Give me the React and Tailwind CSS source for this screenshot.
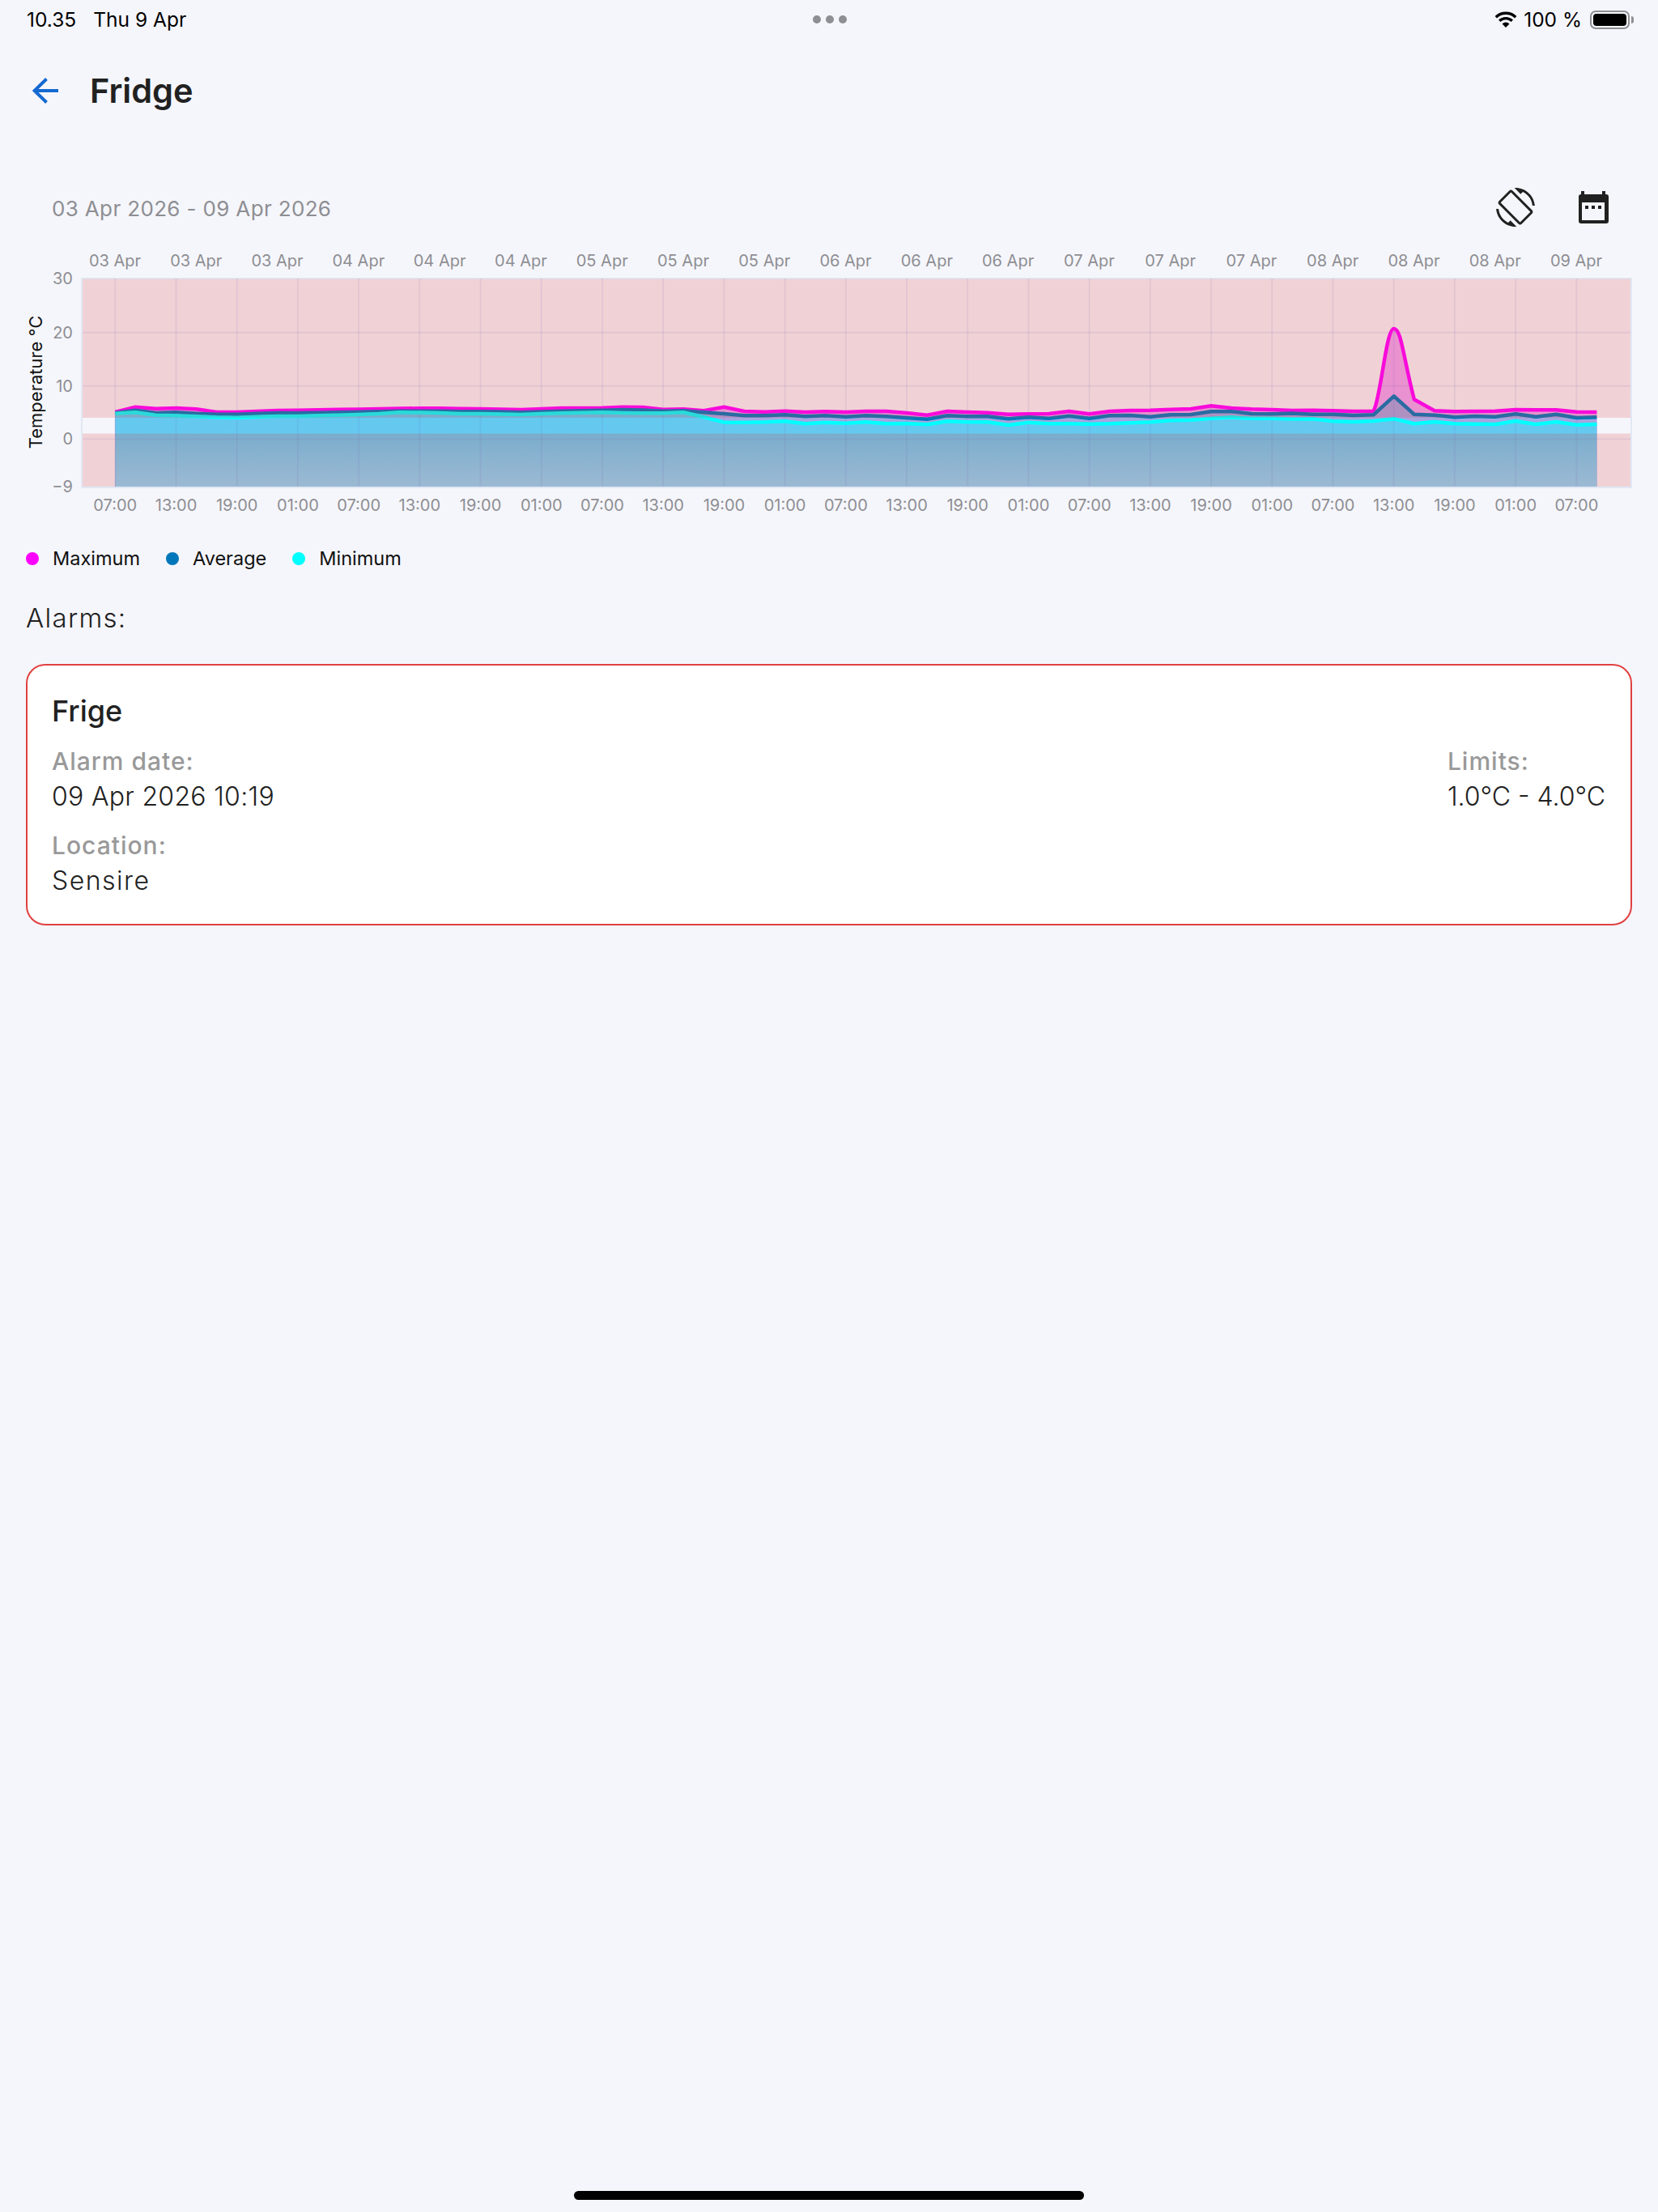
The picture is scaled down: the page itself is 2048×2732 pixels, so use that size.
import React from "react";

const maxT = [509,502.7,504.7,504,505.3,509,509,508,507,506.7,506.3,505.7,505.5,505,504.5,504.3,504.3,504.8,505,505.5,506,505,504,504,503.7,502.7,503,505.7,505.3,507.3,502.7,508,508.7,507.7,509,508.3,509,508,508,510,512.7,508,509,509.7,511.7,511.3,511,508,511.3,508,507,506.7,505.7,505,501.3,504,505.3,506,507,506.7,507.3,508,507.7,406,493.3,507.3,508.3,508,507.7,506,506.3,506.3,508.7,509];
const avgT = [510,506.7,510,509.3,510.7,511.7,511.7,510.7,510,510,509.7,509.3,508.7,508.3,507.7,507.7,507.7,508.3,508.3,508.5,509.3,508.5,507.7,507.2,506.7,506,506.5,507.7,507.3,509.3,511,513.3,513.3,512.3,514.3,513.3,514.7,513.3,514.3,516,517.7,513.3,514.3,514.3,517.3,515.3,516.7,513.7,516.7,513.3,513,514.7,512.3,512,508.3,508.3,511,511.3,510.5,511.7,511.7,513,512.3,489.3,511.7,512.7,515.3,514,514.7,511.3,514.7,511.7,516,515.3];
const minT = [510.7,509.3,512.7,513.3,514.3,515.3,515.7,514.7,514,514,513.3,512.7,512,511,509.3,509.6,510,511,511,511.5,512,511,510.3,509.8,509.3,510,510.3,510.3,509.3,515,521.7,521.7,521.3,520.3,523.3,521.7,522.7,521.3,523.3,523,524.3,520.3,521.3,521.3,525,521.7,523.3,523.3,523.7,523.3,522.3,521.3,519.3,518.7,516.7,515.3,516.7,516.7,517.5,517.3,520.3,521,520,517.3,523.3,521,523.3,523.7,524,520,524,521,524.7,524];

const startX = 142.3;
const stepX = 25.07;
const bottomY = 601;

// the spike on the max line is the only rounded part, the rest is straight segments
const spikeCurves = {
  62: "C1706 490 1712 406 1721.7 406",
  63: "C1731 406 1733 440 1746.8 493.3",
};

const linePath = (ys, curves = {}) => {
  let d = `M${startX} ${ys[0]}`;
  for (let i = 1; i < ys.length; i++) {
    d += curves[i - 1] ? ` ${curves[i - 1]}` : ` L${startX + i * stepX} ${ys[i]}`;
  }
  return d;
};

const areaPath = (ys, curves) => {
  const lastX = startX + (ys.length - 1) * stepX;
  return `${linePath(ys, curves)} L${lastX} ${bottomY} L${startX} ${bottomY} Z`;
};

const dayLabels = ["03 Apr","03 Apr","03 Apr","04 Apr","04 Apr","04 Apr","05 Apr","05 Apr","05 Apr","06 Apr","06 Apr","06 Apr","07 Apr","07 Apr","07 Apr","08 Apr","08 Apr","08 Apr","09 Apr"];
const hours = ["07:00", "13:00", "19:00", "01:00"];
const hourLabels = Array.from({ length: 25 }, (_, i) => hours[i % 4]);
const yLabels = [
  { text: "30", y: 344 },
  { text: "20", y: 411 },
  { text: "10", y: 477 },
  { text: "0", y: 542 },
  { text: "\u22129", y: 601 },
];

const Chart = () => (
  <svg className="block w-[2048px] h-[340px]" viewBox="0 300 2048 340">
    <defs>
      <linearGradient id="minFill" gradientUnits="userSpaceOnUse" x1="0" y1="510" x2="0" y2="601">
        <stop offset="0" stopColor="#63c8ef" />
        <stop offset="0.3" stopColor="#66c9ef" />
        <stop offset="1" stopColor="#8ed7f7" />
      </linearGradient>
    </defs>

    <rect x="101" y="344" width="1914" height="258" fill="#f5f6fb" stroke="#e0e8f5" strokeWidth="2" />

    <path d={areaPath(maxT, spikeCurves)} fill="#eda7f2" />
    <path d={areaPath(avgT)} fill="#a5a5e1" />
    <path d={areaPath(minT)} fill="url(#minFill)" />

    {hourLabels.map((_, i) => (
      <line key={i} x1={startX + i * 75.21} x2={startX + i * 75.21} y1="344" y2="601" stroke="#6464c8" strokeOpacity="0.11" strokeWidth="2" />
    ))}
    {[410.7, 476.7, 542.3].map((y) => (
      <line key={y} x1="102" x2="2014" y1={y} y2={y} stroke="#6464c8" strokeOpacity="0.11" strokeWidth="2" />
    ))}

    <path d={linePath(maxT, spikeCurves)} fill="none" stroke="#ff00ff" strokeWidth="4.5" strokeLinejoin="round" />
    <path d={linePath(avgT)} fill="none" stroke="#0077bb" strokeWidth="4.5" strokeLinejoin="round" />
    <path d={linePath(minT)} fill="none" stroke="#00ffff" strokeWidth="4.5" strokeLinejoin="round" />

    {/* out of limit zones sit on top of the series */}
    <rect x="102" y="344.5" width="1912" height="171.5" fill="#d93a3a" fillOpacity="0.19" />
    <rect x="102" y="535.5" width="1912" height="65.5" fill="#d93a3a" fillOpacity="0.19" />

    {dayLabels.map((label, i) => (
      <text key={i} x={142 + i * 100.28} y="329" textAnchor="middle" className="text-[20px] fill-[#8e8e93]">
        {label}
      </text>
    ))}
    {hourLabels.map((label, i) => (
      <text key={i} x={startX + i * 75.21} y="630.5" textAnchor="middle" className="text-[20px] fill-[#8e8e93]">
        {label}
      </text>
    ))}
    {yLabels.map((item) => (
      <text key={item.text} x="90" y={item.y + 7} textAnchor="end" className="text-[20px] fill-[#8e8e93]">
        {item.text}
      </text>
    ))}
    <text x="52" y="472" textAnchor="middle" transform="rotate(-90 52 472)" className="text-[22px] fill-[#111111]">
      Temperature °C
    </text>
  </svg>
);

const StatusBar = () => (
  <div className="grid grid-cols-3 items-center h-[48px] pl-[33px] pr-[30px] text-[24.5px] text-black">
    <div className="flex gap-[21px]">
      <span>10.35</span>
      <span>Thu 9 Apr</span>
    </div>
    <div className="flex justify-center gap-[6px]">
      <span className="w-[10px] h-[10px] rounded-full bg-[#8e8e93]"></span>
      <span className="w-[10px] h-[10px] rounded-full bg-[#8e8e93]"></span>
      <span className="w-[10px] h-[10px] rounded-full bg-[#8e8e93]"></span>
    </div>
    <div className="flex items-center justify-end">
      <svg className="w-[28px] h-[20px]" viewBox="0 0 28 20" fill="none" stroke="black">
        <path d="M1.8 7.2A17.5 17.5 0 0 1 26.2 7.2" strokeWidth="3.4" />
        <path d="M6.2 11.8A11.2 11.2 0 0 1 21.8 11.8" strokeWidth="3.4" />
        <path d="M14 20L9.6 15.4A6.2 6.2 0 0 1 18.4 15.4Z" fill="black" stroke="none" />
      </svg>
      <span className="ml-[8px]">100 %</span>
      <div className="ml-[10px] w-[49px] h-[23px] rounded-[7px] border-2 border-[#8e8e93] p-[2px]">
        <div className="w-full h-full rounded-[4px] bg-black"></div>
      </div>
      <div className="ml-[2px] w-[3px] h-[9px] rounded-r-full bg-[#8e8e93]"></div>
    </div>
  </div>
);

const LegendItem = ({ dot, label }) => (
  <div className="flex items-center gap-[17px]">
    <span className={`w-[16px] h-[16px] rounded-full ${dot}`}></span>
    <span>{label}</span>
  </div>
);

const App = () => {
  return (
    <div className="relative flex flex-col w-[2048px] h-[2732px] bg-[#f5f6fb] font-['Inter',sans-serif] text-[#212121]">
      <StatusBar />

      <div className="flex items-center h-[64px] mt-[32px] pl-[40px]">
        <svg className="w-[32px] h-[32px]" viewBox="0 0 32 32" fill="none" stroke="#1469d0" strokeWidth="4">
          <path d="M32 16H3" />
          <path d="M17.5 1.5L2.5 16L17.5 30.5" />
        </svg>
        <h1 className="ml-[39px] text-[41.5px] font-semibold">Fridge</h1>
      </div>

      <div className="flex items-center justify-between h-[48px] mt-[88px] pl-[64px] pr-[56px]">
        <span className="pt-[3px] text-[26px] tracking-[0.35px] text-[#8e8e93]">03 Apr 2026 - 09 Apr 2026</span>
        <div className="flex gap-[48px]">
          <svg className="w-[48px] h-[48px]" viewBox="0 0 24 24" fill="#212121">
            <path d="M16.48 2.52c3.27 1.55 5.61 4.72 5.97 8.48h1.5C23.44 4.84 18.29 0 12 0l-.66.03 3.81 3.81 1.33-1.32zm-6.25-.77c-.59-.59-1.54-.59-2.12 0L1.75 8.11c-.59.59-.59 1.54 0 2.12l12.02 12.02c.59.59 1.54.59 2.12 0l6.36-6.36c.59-.59.59-1.54 0-2.12L10.23 1.75zm4.6 19.44L2.81 9.17l6.36-6.36 12.02 12.02-6.36 6.36zm-7.31.29C4.25 19.94 1.91 16.76 1.55 13H.05C.56 19.16 5.71 24 12 24l.66-.03-3.81-3.81-1.33 1.32z" />
          </svg>
          <svg className="w-[48px] h-[48px]" viewBox="0 0 48 48" fill="#212121">
            <path fillRule="evenodd" d="M9 4h4v4h22V4h4v4h1a3 3 0 0 1 3 3v30a3 3 0 0 1-3 3H9a3 3 0 0 1-3-3V11a3 3 0 0 1 3-3V4zm1 14v22h28V18H10z" />
            <rect x="14" y="22" width="4" height="4" />
            <rect x="22" y="22" width="4" height="4" />
            <rect x="30" y="22" width="4" height="4" />
          </svg>
        </div>
      </div>

      <div className="mt-[20px]">
        <Chart />
      </div>

      <div className="flex items-center gap-[32px] h-[32px] mt-[34px] pl-[32px] text-[23.5px] text-[#111111]">
        <LegendItem dot="bg-[#ff00ff]" label="Maximum" />
        <LegendItem dot="bg-[#0077bb]" label="Average" />
        <LegendItem dot="bg-[#00ffff]" label="Minimum" />
      </div>

      <div className="h-[40px] mt-[37px] pl-[32px] text-[33px] leading-[40px] tracking-[1.3px] font-light">Alarms:</div>

      <div className="mt-[37px] mx-[32px] h-[323px] rounded-3xl border-2 border-[#e04040] bg-white pl-[30px] pr-[31px] pt-[34px]">
        <div className="text-[36px] leading-[44px] font-medium">Frige</div>
        <div className="flex justify-between mt-[22px]">
          <div>
            <div className="text-[30px] leading-[36px] tracking-[1px] font-medium text-[#999999]">Alarm date:</div>
            <div className="mt-[4px] text-[32px] leading-[44px] tracking-[0.3px] font-light">09 Apr 2026 10:19</div>
            <div className="mt-[20px] text-[30px] leading-[36px] tracking-[1px] font-medium text-[#999999]">Location:</div>
            <div className="mt-[4px] text-[32px] leading-[44px] tracking-[1.5px] font-light">Sensire</div>
          </div>
          <div>
            <div className="text-[30px] leading-[36px] tracking-[1px] font-medium text-[#999999]">Limits:</div>
            <div className="mt-[4px] text-[32px] leading-[44px] font-light">1.0°C - 4.0°C</div>
          </div>
        </div>
      </div>

      <div className="mt-auto mb-[15px] mx-auto w-[630px] h-[11px] rounded-full bg-black"></div>
    </div>
  );
};

export default App;
